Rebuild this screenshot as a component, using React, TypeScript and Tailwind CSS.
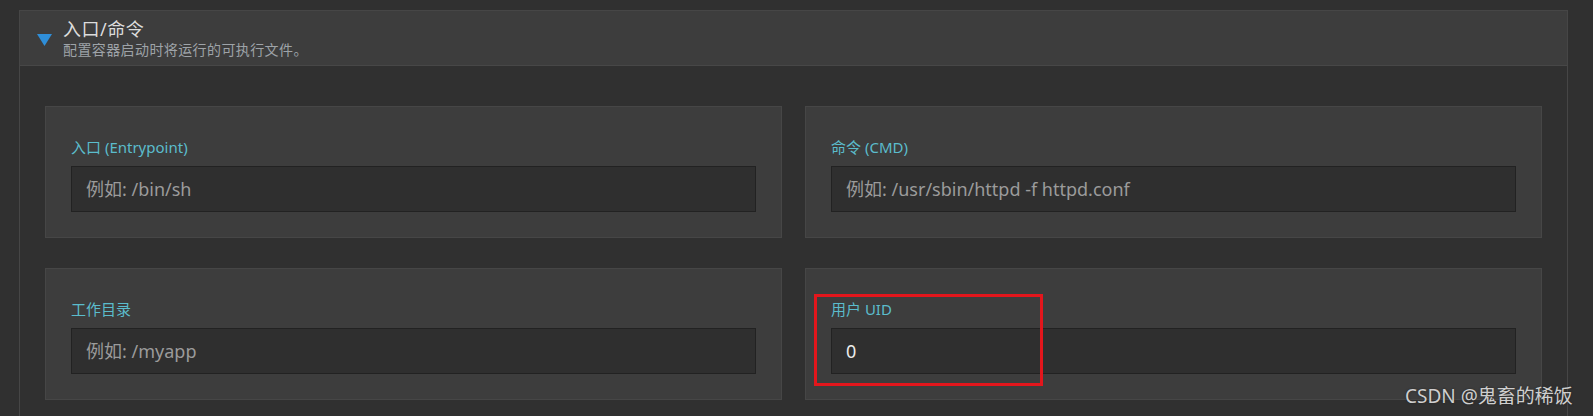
import React from 'react'

type FieldProps = {
  label: string
  placeholder?: string
  value?: string
}

function Field({ label, placeholder, value }: FieldProps) {
  return (
    <div className="bg-[#3d3d3d] border border-[#464646] pt-[30px] pb-[25px] px-[25px]">
      <div className="text-[15px] leading-[20px] text-[#5bbccc] mb-[9px]">{label}</div>
      <div className="h-[46px] bg-[#2f2f2f] border border-[#222222] flex items-center px-[14px]">
        {value ? (
          <span className="text-[18px] text-[#ececec]">{value}</span>
        ) : (
          <span className="text-[18px] text-[#9b9b9b]">{placeholder}</span>
        )}
      </div>
    </div>
  )
}

export default function App() {
  return (
    <div
      className="relative w-[1593px] h-[416px] overflow-hidden bg-[#303030] pt-[10px] pl-[19px] pr-[25px]"
      style={{ fontFamily: '"Noto Sans", "Noto Sans CJK SC", sans-serif' }}
    >
      <div className="border border-[#464646] h-[420px]">
        <div className="h-[55px] bg-[#3d3d3d] border-b border-[#474747] flex items-center">
          <svg width="15" height="12" viewBox="0 0 15 12" className="ml-[17px] mr-[11px] mt-[4px]">
            <path d="M0 0 L15 0 L7.5 12 Z" fill="#2f8ed8" />
          </svg>
          <div className="flex flex-col">
            <span className="text-[18px] leading-[22px] text-[#dcdcdc] tracking-[0.5px]">入口/命令</span>
            <span className="text-[14px] leading-[16px] mt-[2px] text-[#9ea3a8] tracking-[0.4px]">配置容器启动时将运行的可执行文件。</span>
          </div>
        </div>
        <div className="px-[25px] pt-[40px] grid grid-cols-2 gap-x-[23px] gap-y-[30px]">
          <Field label="入口 (Entrypoint)" placeholder="例如: /bin/sh" />
          <Field label="命令 (CMD)" placeholder="例如: /usr/sbin/httpd -f httpd.conf" />
          <Field label="工作目录" placeholder="例如: /myapp" />
          <Field label="用户 UID" value="0" />
        </div>
      </div>
      <div className="absolute left-[814px] top-[294px] w-[229px] h-[92px] border-[3px] border-[#e3161c]" />
      <div className="absolute left-[1405px] top-[382px] text-[19px] leading-[28px] text-[#cfcfcf] [text-shadow:0_0_2px_#222]">
        CSDN @鬼畜的稀饭
      </div>
    </div>
  )
}
